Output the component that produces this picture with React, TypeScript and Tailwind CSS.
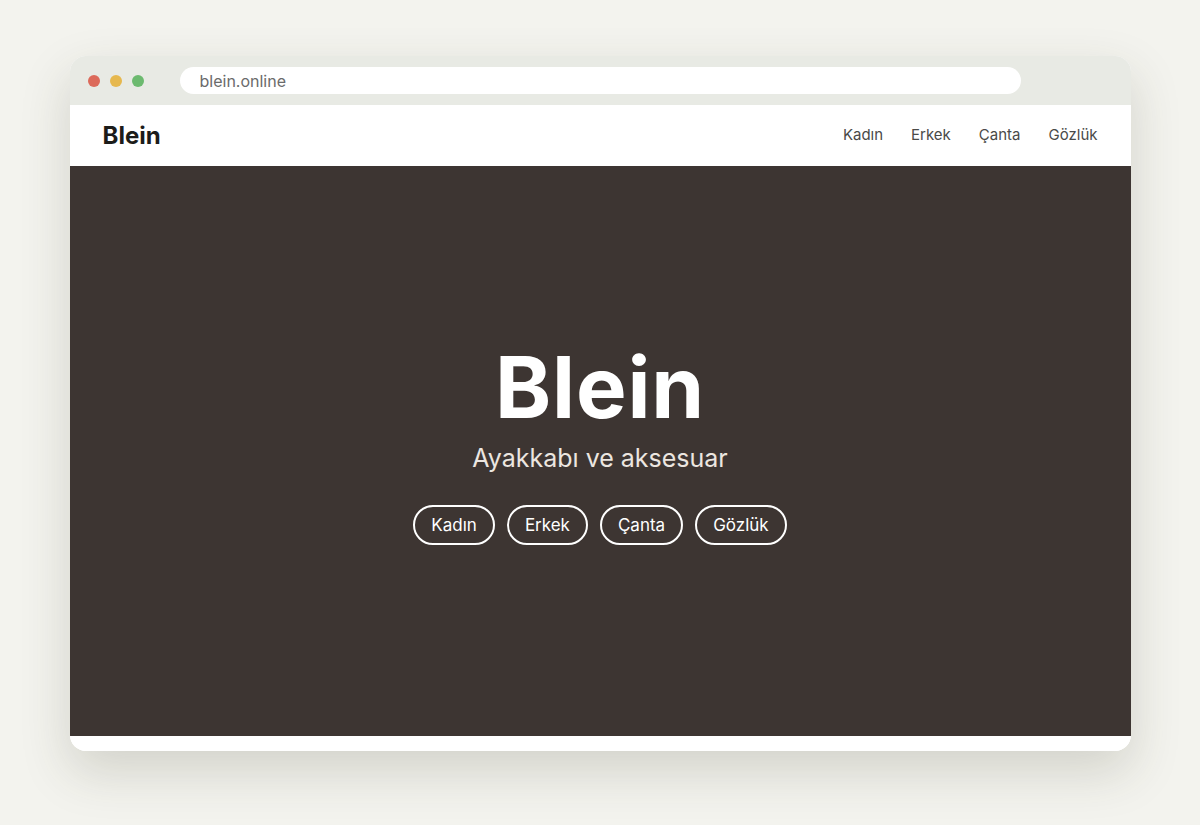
const links = ["Kadın", "Erkek", "Çanta", "Gözlük"];

export default function App() {
  return (
    <div
      className="min-h-[825px] w-full bg-[#f3f3ee] flex items-start justify-center pt-[56px]"
      style={{ fontFamily: "Inter, 'Noto Sans', sans-serif" }}
    >
      <div className="w-[1061px] rounded-2xl overflow-hidden bg-white shadow-[0_20px_50px_rgba(60,60,40,0.18)]">
        {/* browser bar */}
        <div className="h-[49px] bg-[#e8eae4] flex items-center px-[18px]">
          <div className="flex gap-[10px]">
            <span className="w-3 h-3 rounded-full bg-[#dc6a5a]" />
            <span className="w-3 h-3 rounded-full bg-[#e6b84e]" />
            <span className="w-3 h-3 rounded-full bg-[#6cba6f]" />
          </div>
          <div className="ml-[36px] w-[841px] h-[27px] rounded-full bg-white flex items-center px-5 text-[16px] text-[#6b6b6b]">
            blein.online
          </div>
        </div>

        {/* nav */}
        <div className="h-[61px] flex items-center justify-between pl-[33px] pr-[33px]">
          <span className="text-[24px] font-bold text-[#1c1c1a]">Blein</span>
          <nav className="flex gap-[28px] text-[15px] text-[#4a4a48]">
            {links.map((l) => (
              <a key={l}>{l}</a>
            ))}
          </nav>
        </div>

        {/* hero */}
        <div className="h-[570px] bg-[#3d3532] flex flex-col items-center justify-center pb-[12px]">
          <h1 className="text-[85px] leading-none font-bold text-white tracking-[0.01em]">Blein</h1>
          <p className="mt-[10px] text-[25px] text-[#ece6e0]">Ayakkabı ve aksesuar</p>
          <div className="mt-[28px] flex gap-3">
            {links.map((l) => (
              <button
                key={l}
                className="h-[40px] px-[16px] rounded-full border-2 border-white text-white text-[17px]"
              >
                {l}
              </button>
            ))}
          </div>
        </div>

        <div className="h-[15px] bg-white" />
      </div>
    </div>
  );
}
